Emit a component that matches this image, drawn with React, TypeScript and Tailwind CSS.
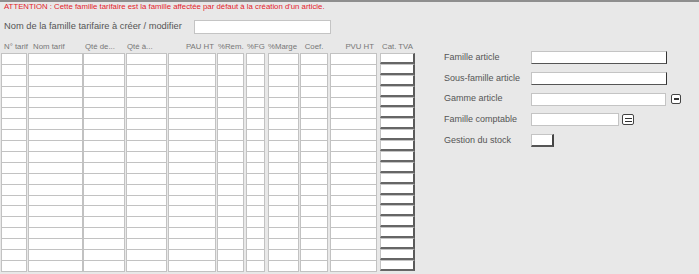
import React from 'react';

const cols = [
  { label: 'N° tarif', cls: 'ml-[1px] w-[26px]', head: 'text-left pl-[3px]' },
  { label: 'Nom tarif', cls: 'ml-[1px] w-[55px]', head: 'text-left pl-[5px]' },
  { label: 'Qté de...', cls: 'ml-0 w-[42px]', head: 'text-left pl-[2px]' },
  { label: 'Qté à...', cls: 'ml-[1px] w-[41px]', head: 'text-left pl-[1px]' },
  { label: 'PAU HT', cls: 'ml-[1px] w-[48px]', head: 'text-right pr-[2px]' },
  { label: '%Rem.', cls: 'ml-[1px] w-[27px]', head: 'text-left pl-[1px]' },
  { label: '%FG', cls: 'ml-[2px] w-[19px]', head: 'text-left pl-[1px]' },
  { label: '%Marge', cls: 'ml-[3px] w-[31px]', head: 'text-left pl-0' },
  { label: 'Coef.', cls: 'ml-[1px] w-[28px]', head: 'text-center' },
  { label: 'PVU HT', cls: 'ml-[2px] w-[47px]', head: 'text-right pr-[3px]' },
];

const rows = Array.from({ length: 20 }, (_, i) => i);

export default function App() {
  return (
    <div className="w-[699px] h-[274px] overflow-hidden bg-[#e8e8e8] border-t-2 border-[#8e8e8e] font-['Liberation_Sans',Arial,sans-serif]">
      {/* warning */}
      <p className="pl-[4px] h-[9px] text-[7.8px] leading-[9px] text-[#e4222a] whitespace-nowrap">
        ATTENTION : Cette famille tarifaire est la famille affectée par défaut à la création d'un article.
      </p>

      {/* family name */}
      <div className="flex items-center mt-[9px] h-[14px]">
        <span className="w-[194px] pl-[4px] text-[9.3px] text-[#555] whitespace-nowrap">
          Nom de la famille tarifaire à créer / modifier
        </span>
        <div className="w-[137px] h-[14px] bg-white border border-[#c4c4c4]"></div>
      </div>

      <div className="flex mt-[6px]">
        {/* tariff grid */}
        <div className="flex">
          {cols.map((c) => (
            <div key={c.label} className={`${c.cls} flex flex-col`}>
              <div className={`h-[13px] text-[7.8px] leading-[14px] text-[#777] whitespace-nowrap ${c.head}`}>
                {c.label}
              </div>
              <div className="flex flex-col border-t border-[#c2c2c2]">
                {rows.map((r) => (
                  <div key={r} className="h-[10.9px] bg-white border-x border-b border-[#c2c2c2]"></div>
                ))}
              </div>
            </div>
          ))}
          <div className="ml-[3px] w-[35px] flex flex-col">
            <div className="h-[13px] text-[7.8px] leading-[14px] text-[#777] text-center whitespace-nowrap">Cat. TVA</div>
            <div className="flex flex-col">
              {rows.map((r) => (
                <div
                  key={r}
                  className="h-[10.9px] bg-white border-t border-l border-r-2 border-b-2 border-t-[#c4c4c4] border-l-[#c4c4c4] border-r-[#5a5a5a] border-b-[#666]"
                ></div>
              ))}
            </div>
          </div>
        </div>

        {/* article settings */}
        <div className="ml-[29px] pt-[11px] flex flex-col gap-[7.8px] text-[9px] text-[#555]">
          <div className="flex items-center h-[13px]">
            <span className="w-[87px] whitespace-nowrap">Famille article</span>
            <div className="w-[136px] h-[13px] bg-white border-t border-l border-[#c4c4c4] border-r border-b border-r-[#333] border-b-[#555]"></div>
          </div>
          <div className="flex items-center h-[13px]">
            <span className="w-[87px] whitespace-nowrap">Sous-famille article</span>
            <div className="w-[136px] h-[13px] bg-white border-t border-l border-[#c4c4c4] border-r border-b border-r-[#333] border-b-[#555]"></div>
          </div>
          <div className="flex items-center h-[13px]">
            <span className="w-[87px] whitespace-nowrap">Gamme article</span>
            <div className="w-[135px] h-[13px] bg-white border border-[#c4c4c4]"></div>
            <div className="ml-[5px] w-[10px] h-[10px] bg-white border border-[#444] rounded-[2px] flex items-center justify-center">
              <div className="w-[5px] h-[1.5px] bg-[#333]"></div>
            </div>
          </div>
          <div className="flex items-center h-[13px]">
            <span className="w-[87px] whitespace-nowrap">Famille comptable</span>
            <div className="w-[88px] h-[13px] bg-white border border-[#c4c4c4]"></div>
            <div className="ml-[3px] w-[12px] h-[11px] bg-white border border-[#444] rounded-[2px] flex flex-col items-center justify-center gap-[2px]">
              <div className="w-[7px] h-[1px] bg-[#333]"></div>
              <div className="w-[7px] h-[1px] bg-[#333]"></div>
            </div>
          </div>
          <div className="flex items-center h-[13px]">
            <span className="w-[87px] whitespace-nowrap">Gestion du stock</span>
            <div className="w-[23px] h-[13px] bg-white border-t border-l border-[#c4c4c4] border-r-2 border-b-2 border-r-[#444] border-b-[#555]"></div>
          </div>
        </div>
      </div>
    </div>
  );
}
